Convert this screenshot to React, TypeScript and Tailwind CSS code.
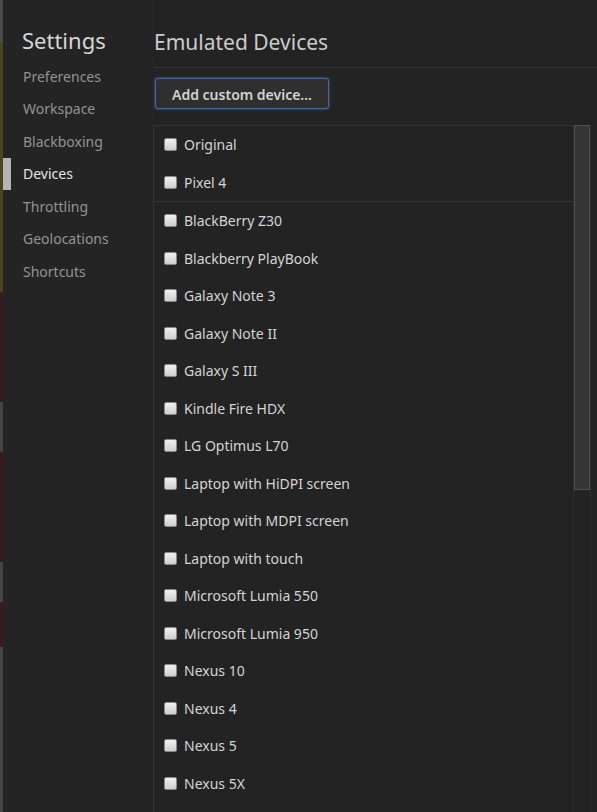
import React from 'react';

const navItems = ['Preferences', 'Workspace', 'Blackboxing', 'Devices', 'Throttling', 'Geolocations', 'Shortcuts'];

const topDevices = ['Original', 'Pixel 4'];

const devices = [
  'BlackBerry Z30',
  'Blackberry PlayBook',
  'Galaxy Note 3',
  'Galaxy Note II',
  'Galaxy S III',
  'Kindle Fire HDX',
  'LG Optimus L70',
  'Laptop with HiDPI screen',
  'Laptop with MDPI screen',
  'Laptop with touch',
  'Microsoft Lumia 550',
  'Microsoft Lumia 950',
  'Nexus 10',
  'Nexus 4',
  'Nexus 5',
  'Nexus 5X',
];

function DeviceRow({ name }: { name: string }) {
  return (
    <label className="flex h-[37.5px] shrink-0 items-center pl-[10px]">
      <span className="h-[13px] w-[13px] rounded-[2px] border border-[#8a8a8a] bg-gradient-to-b from-[#f0f0f0] to-[#cfcfcf]" />
      <span className="ml-[7px] text-[14px] text-[#d4d4d4]">{name}</span>
    </label>
  );
}

export default function App() {
  return (
    <div className="flex h-[812px] w-[597px] overflow-hidden bg-[#242424] font-['Noto_Sans','Open_Sans',sans-serif]">
      {/* page edge strip */}
      <div className="flex w-[3px] shrink-0 flex-col">
        <div className="h-[42px] bg-[#4a4a4a]" />
        <div className="h-[250px] bg-[#4a4520]" />
        <div className="h-[110px] bg-[#3a1a1a]" />
        <div className="h-[50px] bg-[#464646]" />
        <div className="h-[110px] bg-[#3a1a1a]" />
        <div className="h-[40px] bg-[#464646]" />
        <div className="h-[45px] bg-[#3a1a1a]" />
        <div className="flex-1 bg-[#464646]" />
      </div>

      {/* sidebar */}
      <aside className="flex w-[151px] shrink-0 flex-col">
        <h1 className="h-[60px] pl-[19px] pt-[26px] text-[22px] leading-[28px] text-[#d6d6d6]">Settings</h1>
        {navItems.map((item) => {
          const active = item === 'Devices';
          return (
            <div key={item} className="flex h-[32.5px] items-center">
              <div className={`h-full w-[8px] ${active ? 'bg-[#b4b4b4]' : ''}`} />
              <span className={`pl-[12px] text-[14px] ${active ? 'text-[#e4e4e4]' : 'text-[#939393]'}`}>{item}</span>
            </div>
          );
        })}
      </aside>

      {/* main */}
      <main className="flex min-w-0 flex-1 flex-col bg-[#232323]">
        <div className="h-[68px] border-b border-[#333333] pt-[28px]">
          <h2 className="text-[21px] leading-[28px] text-[#cbcbcb]">Emulated Devices</h2>
        </div>
        <div className="h-[57px] pl-[1px] pt-[10px]">
          <button className="h-[31px] w-[174px] rounded-[3px] border border-[#4a6694] bg-[#2f2f2f] pt-[1px] text-[14px] font-semibold text-[#d2d2d2] shadow-[0_0_2px_1px_rgba(70,100,150,0.5)]">
            Add custom device...
          </button>
        </div>
        <div className="flex min-h-0 flex-1">
          <div className="-ml-[1px] flex min-w-0 flex-1 flex-col border-l border-t border-[#333333]">
            {topDevices.map((d) => (
              <DeviceRow key={d} name={d} />
            ))}
            <div className="border-b border-[#333333]" />
            {devices.map((d) => (
              <DeviceRow key={d} name={d} />
            ))}
          </div>
          <div className="flex w-[18px] shrink-0 flex-col border-x border-[#2e2e2e]">
            <div className="h-[365px] border border-[#505050] bg-[#363636]" />
          </div>
          <div className="w-[6px] shrink-0" />
        </div>
      </main>
    </div>
  );
}
